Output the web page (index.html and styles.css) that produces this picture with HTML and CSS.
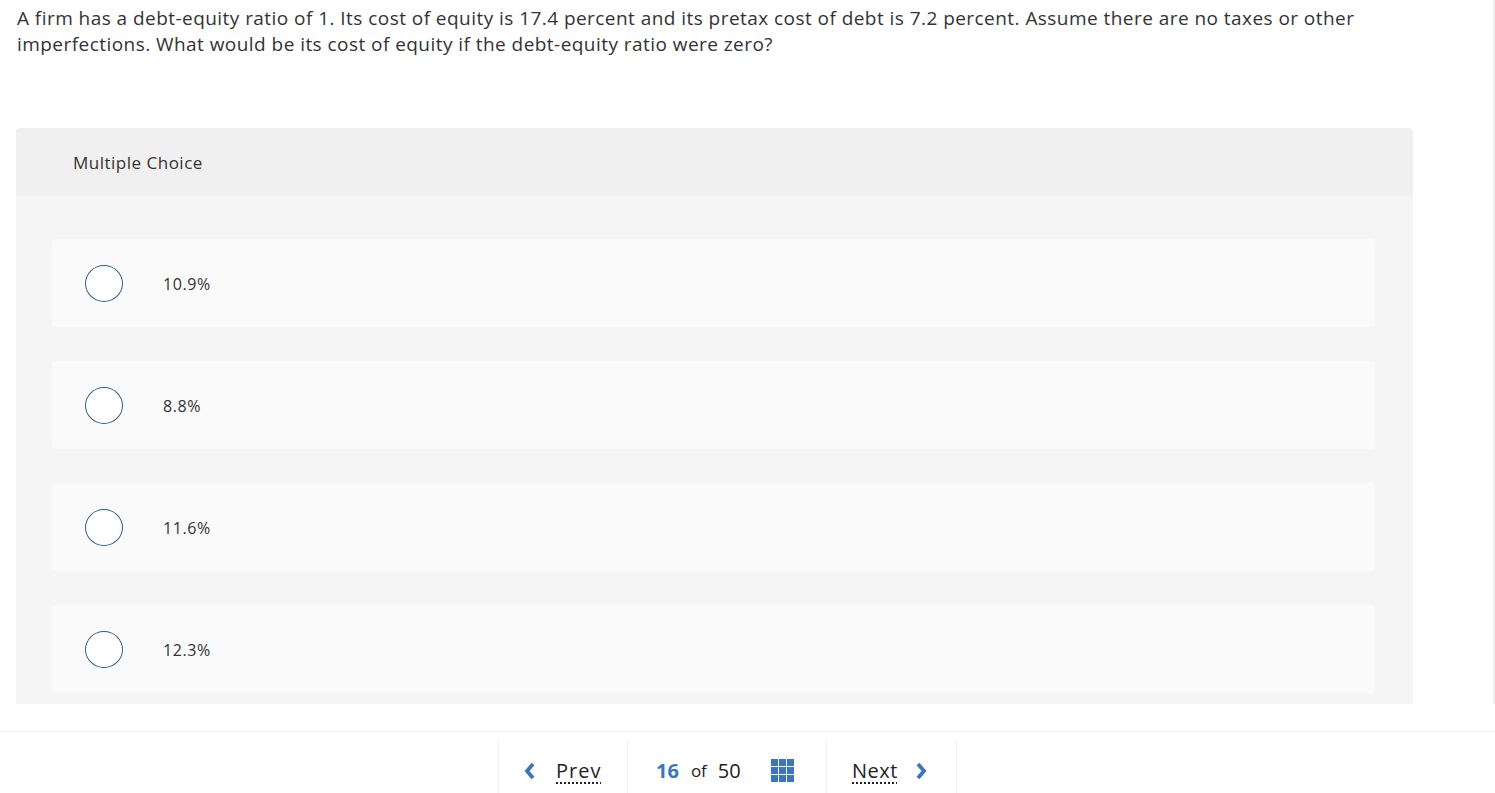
FILE: index.html
```html
<!DOCTYPE html>
<html>
<head>
<meta charset="utf-8">
<link rel="stylesheet" href="styles.css">
</head>
<body>
<div class="content">
  <p class="question">A firm has a debt-equity ratio of 1. Its cost of equity is 17.4 percent and its pretax cost of debt is 7.2 percent. Assume there are no taxes or other imperfections. What would be its cost of equity if the debt-equity ratio were zero?</p>
  <div class="panel">
    <div class="panel-head">Multiple Choice</div>
    <div class="panel-body">
      <div class="option"><span class="radio"></span><span class="label">10.9%</span></div>
      <div class="option"><span class="radio"></span><span class="label">8.8%</span></div>
      <div class="option"><span class="radio"></span><span class="label">11.6%</span></div>
      <div class="option"><span class="radio"></span><span class="label">12.3%</span></div>
    </div>
  </div>
</div>
<div class="footer">
  <div class="nav">
    <div class="nav-box prev">
      <svg class="chev" width="14" height="18" viewBox="0 0 14 18"><path d="M10 2 L4 9 L10 16" fill="none" stroke="#3b75c0" stroke-width="3.8" stroke-linejoin="miter"/></svg>
      <span class="link">Prev</span>
    </div>
    <div class="nav-mid">
      <span class="cur">16</span><span class="of">of</span><span class="total">50</span>
      <svg class="grid" width="23" height="23" viewBox="0 0 23 23">
        <g fill="#3b75c0">
          <rect x="0" y="0" width="7" height="7"/><rect x="8" y="0" width="7" height="7"/><rect x="16" y="0" width="7" height="7"/>
          <rect x="0" y="8" width="7" height="7"/><rect x="8" y="8" width="7" height="7"/><rect x="16" y="8" width="7" height="7"/>
          <rect x="0" y="16" width="7" height="7"/><rect x="8" y="16" width="7" height="7"/><rect x="16" y="16" width="7" height="7"/>
        </g>
      </svg>
    </div>
    <div class="nav-box next">
      <span class="link">Next</span>
      <svg class="chev" width="14" height="18" viewBox="0 0 14 18"><path d="M4 2 L10 9 L4 16" fill="none" stroke="#3b75c0" stroke-width="3.8" stroke-linejoin="miter"/></svg>
    </div>
  </div>
</div>
</body>
</html>
```
FILE: styles.css
```css
html, body {
  margin: 0;
  padding: 0;
  background: #fff;
}
body {
  font-family: "Open Sans", Lato, sans-serif;
  color: #2f2f2f;
  width: 1495px;
  height: 793px;
  overflow: hidden;
}
.content {
  box-sizing: border-box;
  width: 1495px;
  height: 704px;
  padding-left: 16px;
  border-right: 2px solid #efefef;
}
.question {
  margin: 0;
  padding: 5px 0 0 1px;
  font-size: 19px;
  line-height: 26px;
  letter-spacing: 0.45px;
  width: 1400px;
  color: #333;
}
.panel {
  margin-top: 71px;
  width: 1397px;
  border-radius: 4px 4px 0 0;
  overflow: hidden;
}
.panel-head {
  height: 68px;
  background: #f0f0f0;
  display: flex;
  align-items: center;
  padding-left: 57px;
  font-size: 17px;
  letter-spacing: 0.5px;
  color: #333;
}
.panel-body {
  background: #f5f5f5;
  padding: 43px 38px 11px 36px;
  display: flex;
  flex-direction: column;
  gap: 34px;
}
.option {
  height: 88px;
  background: #fafafa;
  border-radius: 4px;
  display: flex;
  align-items: center;
  padding-left: 33px;
}
.radio {
  box-sizing: border-box;
  width: 38px;
  height: 37px;
  border-radius: 50%;
  border: 1.3px solid #2e5d8c;
  background: #fff;
  flex: none;
}
.label {
  margin-left: 40px;
  font-size: 16px;
  letter-spacing: 0.6px;
  color: #333;
  padding-top: 2px;
}
.footer {
  margin-top: 27px;
  border-top: 1px solid #efefef;
  height: 61px;
  padding-top: 8px;
}
.nav {
  display: flex;
  height: 53px;
  margin-left: 498px;
}
.nav-box {
  box-sizing: border-box;
  width: 130px;
  display: flex;
  align-items: center;
  padding-top: 8px;
  border-left: 1px solid #f0f0f0;
  border-right: 1px solid #f0f0f0;
  font-size: 20px;
  color: #222;
}
.prev {
  padding-left: 24px;
}
.prev .link {
  margin-left: 19px;
  letter-spacing: 1px;
}
.next {
  width: 131px;
  padding-left: 25px;
}
.next .link {
  letter-spacing: 0.5px;
}
.next .chev {
  margin-left: 16px;
}
.link {
  text-decoration: underline dotted;
  text-underline-offset: 4px;
  text-decoration-thickness: 2px;
}
.nav-mid {
  width: 198px;
  display: flex;
  align-items: center;
  padding-top: 8px;
  padding-left: 28px;
  box-sizing: border-box;
  font-size: 20px;
}
.cur {
  color: #3b75c0;
  font-weight: bold;
}
.of {
  font-size: 17px;
  margin-left: 12px;
  color: #222;
}
.total {
  margin-left: 11px;
  color: #222;
}
.grid {
  margin-left: 30px;
}
```
